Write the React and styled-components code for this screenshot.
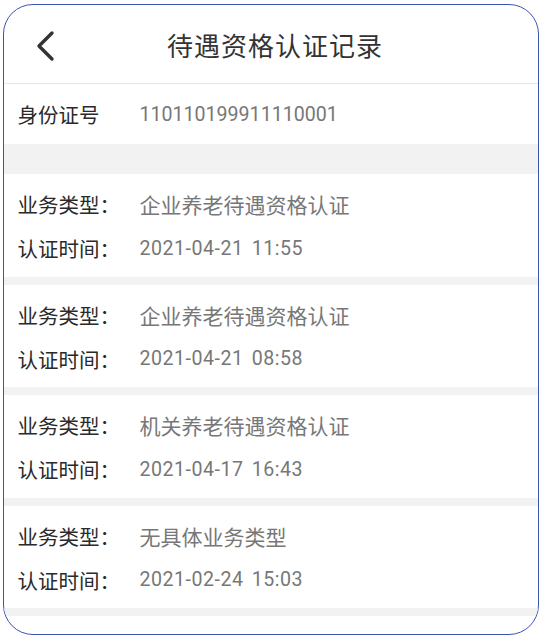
import React from "react";
import styled, { createGlobalStyle } from "styled-components";

const Global = createGlobalStyle`
  html, body { margin: 0; padding: 0; background: #ffffff; }
  body { font-family: Roboto, "Noto Sans CJK SC", sans-serif; }
`;

const Frame = styled.div`
  box-sizing: border-box;
  margin: 4px 3px 0 3px;
  height: 631px;
  border: 1.5px solid #3a55b4;
  border-radius: 30px;
  overflow: hidden;
  background: #fff;
  display: flex;
  flex-direction: column;
`;

const Header = styled.header`
  height: 78px;
  display: flex;
  align-items: center;
  justify-content: center;
  position: relative;
  border-bottom: 1.5px solid #e6e6e6;
  flex-shrink: 0;
`;

const Back = styled.button`
  position: absolute;
  left: 26px;
  top: 25px;
  width: 32px;
  height: 32px;
  padding: 0;
  border: none;
  background: none;
  display: flex;
  align-items: center;
  justify-content: center;
`;

const Title = styled.h1`
  margin: 0 0 0 8px;
  font-size: 26px;
  font-weight: 400;
  color: #333;
  letter-spacing: 1px;
`;

const IdRow = styled.div`
  height: 60px;
  display: flex;
  align-items: center;
  padding-left: 13.5px;
  flex-shrink: 0;
`;

const Label = styled.span`
  width: 122px;
  font-size: 20.5px;
  color: #2a2a2a;
  flex-shrink: 0;
`;

const Value = styled.span`
  font-size: ${(p) => (p.cjk ? "21px" : "19.6px")};
  color: #777;
  letter-spacing: ${(p) => (p.time ? "0.5px" : "0")};
  word-spacing: ${(p) => (p.time ? "3px" : "0")};
`;

const Band = styled.div`
  height: ${(p) => p.h}px;
  background: #f2f2f2;
  flex-shrink: 0;
`;

const Record = styled.div`
  padding: 15px 0 13.5px 13.5px;
  display: flex;
  flex-direction: column;
  gap: 14px;
  flex-shrink: 0;
`;

const Line = styled.div`
  height: 30px;
  display: flex;
  align-items: center;
`;

const records = [
  { type: "企业养老待遇资格认证", time: "2021-04-21 11:55" },
  { type: "企业养老待遇资格认证", time: "2021-04-21 08:58" },
  { type: "机关养老待遇资格认证", time: "2021-04-17 16:43" },
  { type: "无具体业务类型", time: "2021-02-24 15:03" },
];

export default function App() {
  return (
    <>
      <Global />
      <Frame>
        <Header>
          <Back aria-label="返回">
            <svg width="22" height="32" viewBox="0 0 22 32">
              <path d="M17 3 L4 16 L17 29" fill="none" stroke="#333" strokeWidth="3.4" strokeLinecap="round" strokeLinejoin="round" />
            </svg>
          </Back>
          <Title>待遇资格认证记录</Title>
        </Header>
        <IdRow>
          <Label>身份证号</Label>
          <Value>110110199911110001</Value>
        </IdRow>
        <Band h={30} />
        {records.map((r, i) => (
          <React.Fragment key={i}>
            <Record>
              <Line>
                <Label>业务类型：</Label>
                <Value cjk>{r.type}</Value>
              </Line>
              <Line>
                <Label>认证时间：</Label>
                <Value time>{r.time}</Value>
              </Line>
            </Record>
            <Band h={8} />
          </React.Fragment>
        ))}
      </Frame>
    </>
  );
}
